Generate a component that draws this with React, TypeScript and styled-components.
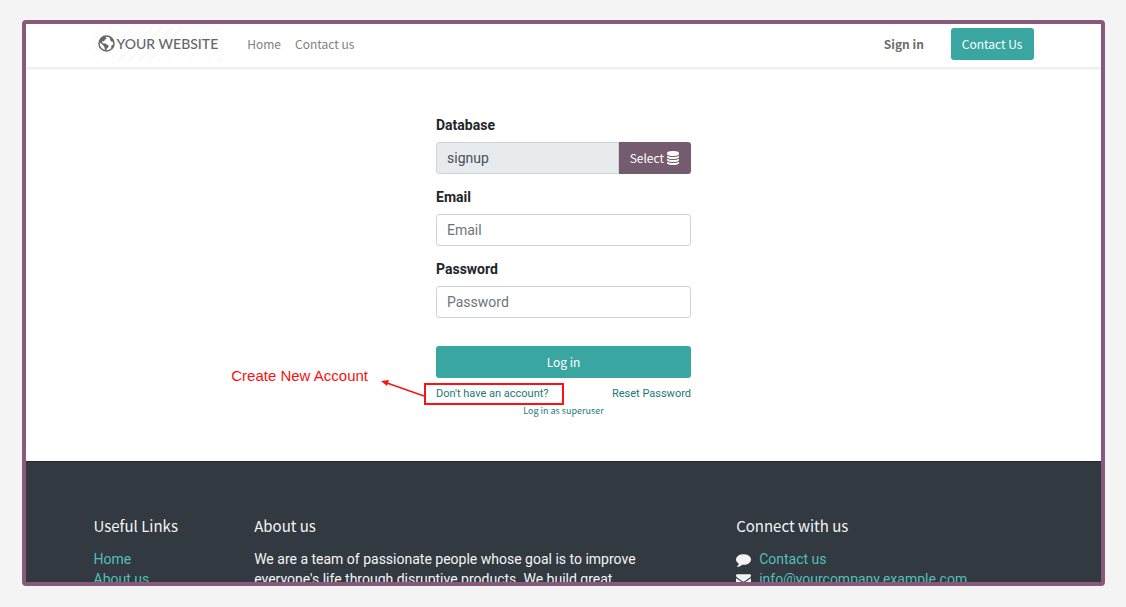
import React from "react";
import styled, { createGlobalStyle } from "styled-components";

const sans = `Roboto, "Liberation Sans", sans-serif`;
const display = `"Noto Sans CJK SC", "Noto Sans", sans-serif`;

const GlobalStyle = createGlobalStyle`
  *, *::before, *::after { box-sizing: border-box; }
  body {
    margin: 0;
    background: #f4f4f4;
    color: #212529;
    font-family: ${sans};
    font-size: 14px;
    line-height: 20px;
  }
  a { text-decoration: none; }
`;

const Page = styled.div`
  height: 100vh;
  padding: 20px 21px 21px 22px;
`;

const Frame = styled.div`
  height: 100%;
  border: 4px solid #875a7b;
  border-radius: 4px;
  background: #fff;
  overflow: hidden;
`;

const Container = styled.div`
  width: 100%;
  max-width: 940px;
  margin: 0 auto;
`;

const Header = styled.header`
  border-bottom: 2px solid #efefef;
  box-shadow: 0 1px 1px #f8f8f8;
`;

const Nav = styled(Container).attrs({ as: "nav" })`
  display: flex;
  align-items: center;
  height: 43px;
  padding-bottom: 4px;
`;

const Brand = styled.a`
  display: flex;
  align-items: center;
  gap: 2px;
  height: 34px;
  margin-right: 26px;
  padding: 0 3px 0 4px;
  color: #666;
  font-family: Lato, sans-serif;
  font-size: 14px;
  font-weight: 500;
  background: repeating-linear-gradient(135deg, #fff 0 6px, #f7f7f7 6px 7px);
`;

const NavLink = styled.a<{ $strong?: boolean }>`
  color: ${(p) => (p.$strong ? "#6c6c6c" : "#808080")};
  font-family: ${display};
  font-size: 12px;
  font-weight: ${(p) => (p.$strong ? 700 : 400)};
  margin-right: ${(p) => (p.$strong ? "27px" : "14px")};
`;

const Spacer = styled.div`
  flex: 1;
`;

const Button = styled.button<{ $tone?: "plum" }>`
  display: flex;
  align-items: center;
  justify-content: center;
  gap: 2px;
  height: 32px;
  padding: 0 11px;
  border: 0;
  border-radius: ${(p) => (p.$tone ? "0 3px 3px 0" : "3px")};
  background: ${(p) => (p.$tone ? "#745b6e" : "#3aa6a2")};
  color: #fff;
  font-family: ${display};
  font-size: 12px;
  line-height: 20px;
`;

const Main = styled.main`
  padding: 46px 0 44px;
`;

const Form = styled.form`
  display: flex;
  flex-direction: column;
  width: 255px;
  margin: 0 auto;
`;

const Field = styled.div`
  margin-bottom: 13px;
`;

const Label = styled.label`
  display: block;
  margin-bottom: 6px;
  line-height: 21px;
  font-weight: 700;
`;

const InputGroup = styled.div`
  display: flex;
`;

const Input = styled.input<{ $joined?: boolean }>`
  flex: 1;
  min-width: 0;
  height: 32px;
  padding: 0 10px;
  border: 1px solid #ced4da;
  border-radius: ${(p) => (p.$joined ? "3px 0 0 3px" : "3px")};
  background: ${(p) => (p.$joined ? "#e7ebee" : "#fff")};
  color: #495057;
  font-family: ${sans};
  font-size: 14px;
  &::placeholder { color: #6c757d; opacity: 1; }
`;

const Actions = styled.div`
  display: flex;
  flex-direction: column;
  margin-top: 15px;
`;

const LinkRow = styled.div`
  display: flex;
  justify-content: space-between;
  margin-top: 6px;
`;

const SmallLink = styled.a`
  position: relative;
  color: #1c7a76;
  font-size: 11px;
  line-height: 20px;
`;

const SuperuserLink = styled.a`
  align-self: center;
  color: #1c7a76;
  font-family: ${display};
  font-size: 9px;
  line-height: 13px;
`;

const Highlight = styled.span`
  position: absolute;
  left: -12px;
  top: -1px;
  width: 140px;
  height: 22px;
  border: 2px solid #f81414;
`;

const Arrow = styled.svg`
  position: absolute;
  left: -55px;
  top: -5px;
`;

const Note = styled.span`
  position: absolute;
  right: 100%;
  top: -18px;
  margin-right: 68px;
  color: #fb1010;
  font-family: "Liberation Sans", sans-serif;
  font-size: 15px;
  white-space: nowrap;
`;

const Footer = styled.footer`
  border-top: 1px solid #24292e;
  background: #323940;
  color: #f4f4f5;
`;

const FooterGrid = styled(Container)`
  display: grid;
  grid-template-columns: repeat(12, 1fr);
  column-gap: 24px;
  padding: 52px 0;
`;

const Column = styled.section<{ $from: number; $span: number }>`
  grid-column: ${(p) => p.$from} / span ${(p) => p.$span};
  p { margin: 0; }
`;

const Heading = styled.h2`
  margin: 0 0 11px;
  font-family: ${display};
  font-size: 15px;
  font-weight: 400;
  line-height: 24px;
`;

const List = styled.ul`
  margin: 0;
  padding: 0;
  list-style: none;
`;

const Item = styled.li`
  display: flex;
  align-items: center;
  gap: 8px;
`;

const FooterLink = styled.a`
  color: #54bfb9;
`;

const Glyph = ({ d, size }: { d: string; size: number }) => (
  <svg width={size} height={size} viewBox="0 0 1792 1792" fill="currentColor" aria-hidden="true">
    <path d={d} />
  </svg>
);

const databasePath =
  "M896 768q237 0 443-43t325-127v170q0 69-103 128t-280 93.5-385 34.5-385-34.5-280-93.5-103-128v-170q119 84 325 127t443 43zm0 768q237 0 443-43t325-127v170q0 69-103 128t-280 93.5-385 34.5-385-34.5-280-93.5-103-128v-170q119 84 325 127t443 43zm0-384q237 0 443-43t325-127v170q0 69-103 128t-280 93.5-385 34.5-385-34.5-280-93.5-103-128v-170q119 84 325 127t443 43zm0-1152q208 0 385 34.5t280 93.5 103 128v128q0 69-103 128t-280 93.5-385 34.5-385-34.5-280-93.5-103-128v-128q0-69 103-128t280-93.5 385-34.5z";
const commentPath =
  "M1792 896q0 174-120 321.5t-326 233-450 85.5q-70 0-145-8-198 175-460 242-49 14-114 22h-5q-15 0-27-10.5t-16-27.5v-1q-3-4-.5-12t2-10 4.5-9.5l6-9 7-8.5 8-9q7-8 31-34.5t34.5-38 31-39.5 32.5-51 27-59 26-76q-157-89-247.5-220t-90.5-281q0-130 71-248.5t191-204.5 286-136.5 348-50.5 348 50.5 286 136.5 191 204.5 71 248.5z";
const envelopePath =
  "M1792 710v794q0 66-47 113t-113 47h-1472q-66 0-113-47t-47-113v-794q44 49 101 87 362 246 497 345 57 42 92.5 65.5t94.5 48 110 24.5h2q51 0 110-24.5t94.5-48 92.5-65.5q170-123 498-345 57-39 100-87zm0-294q0 79-49 151t-122 123q-376 261-468 325-10 7-42.5 31t-54 38.5-52 32.5-57.5 27-50 9h-2q-23 0-50-9t-57.5-27-52-32.5-54-38.5-42.5-31q-91-64-262-182.5t-205-142.5q-62-42-117-115.5t-55-136.5q0-78 41.5-130t118.5-52h1472q65 0 112.5 47t47.5 113z";

const Globe = () => (
  <svg width="17" height="17" viewBox="0 0 34 34" aria-hidden="true">
    <circle cx="17" cy="17" r="15" fill="#fff" stroke="#666" strokeWidth="3" />
    <path
      fill="#666"
      d="M4 9 L9 4 L17 2 L15 5 L18 7 L14 9 L12 13 L9 12 L8 15 L11 17 L15 17 L21 21 L21 24 L17 28 L17 32 L14 31 L13 25 L10 20 L5 16 L3 14 Z M23 4 L28 8 L31 13 L28 14 L25 11 L24 8 Z M31 20 L28 27 L26 24 L28 20 Z"
    />
  </svg>
);

export default function App() {
  return (
    <Page>
      <GlobalStyle />
      <Frame>
        <Header>
          <Nav>
            <Brand href="#">
              <Globe />
              YOUR WEBSITE
            </Brand>
            <NavLink href="#">Home</NavLink>
            <NavLink href="#">Contact us</NavLink>
            <Spacer />
            <NavLink href="#" $strong>Sign in</NavLink>
            <Button type="button">Contact Us</Button>
          </Nav>
        </Header>
        <Main>
          <Form onSubmit={(e) => e.preventDefault()}>
            <Field>
              <Label htmlFor="db">Database</Label>
              <InputGroup>
                <Input id="db" $joined readOnly defaultValue="signup" />
                <Button type="button" $tone="plum">
                  Select
                  <Glyph d={databasePath} size={14} />
                </Button>
              </InputGroup>
            </Field>
            <Field>
              <Label htmlFor="email">Email</Label>
              <InputGroup>
                <Input id="email" type="email" placeholder="Email" />
              </InputGroup>
            </Field>
            <Field>
              <Label htmlFor="password">Password</Label>
              <InputGroup>
                <Input id="password" type="password" placeholder="Password" />
              </InputGroup>
            </Field>
            <Actions>
              <Button type="submit">Log in</Button>
              <LinkRow>
                <SmallLink href="#">
                  Don't have an account?
                  <Highlight />
                  <Arrow width="44" height="20" viewBox="0 0 44 20" aria-hidden="true">
                    <path d="M43 17 L6 4" stroke="#f81414" strokeWidth="1.5" />
                    <path d="M0 2 L8 1 L6 7 Z" fill="#f81414" />
                  </Arrow>
                  <Note>Create New Account</Note>
                </SmallLink>
                <SmallLink href="#">Reset Password</SmallLink>
              </LinkRow>
              <SuperuserLink href="#">Log in as superuser</SuperuserLink>
            </Actions>
          </Form>
        </Main>
        <Footer>
          <FooterGrid>
            <Column $from={1} $span={2}>
              <Heading>Useful Links</Heading>
              <List>
                <Item><FooterLink href="#">Home</FooterLink></Item>
                <Item><FooterLink href="#">About us</FooterLink></Item>
              </List>
            </Column>
            <Column $from={3} $span={6}>
              <Heading>About us</Heading>
              <p>
                We are a team of passionate people whose goal is to improve
                <br />
                everyone's life through disruptive products. We build great
              </p>
            </Column>
            <Column $from={9} $span={4}>
              <Heading>Connect with us</Heading>
              <List>
                <Item>
                  <Glyph d={commentPath} size={15} />
                  <FooterLink href="#">Contact us</FooterLink>
                </Item>
                <Item>
                  <Glyph d={envelopePath} size={15} />
                  <FooterLink href="#">info@yourcompany.example.com</FooterLink>
                </Item>
              </List>
            </Column>
          </FooterGrid>
        </Footer>
      </Frame>
    </Page>
  );
}
